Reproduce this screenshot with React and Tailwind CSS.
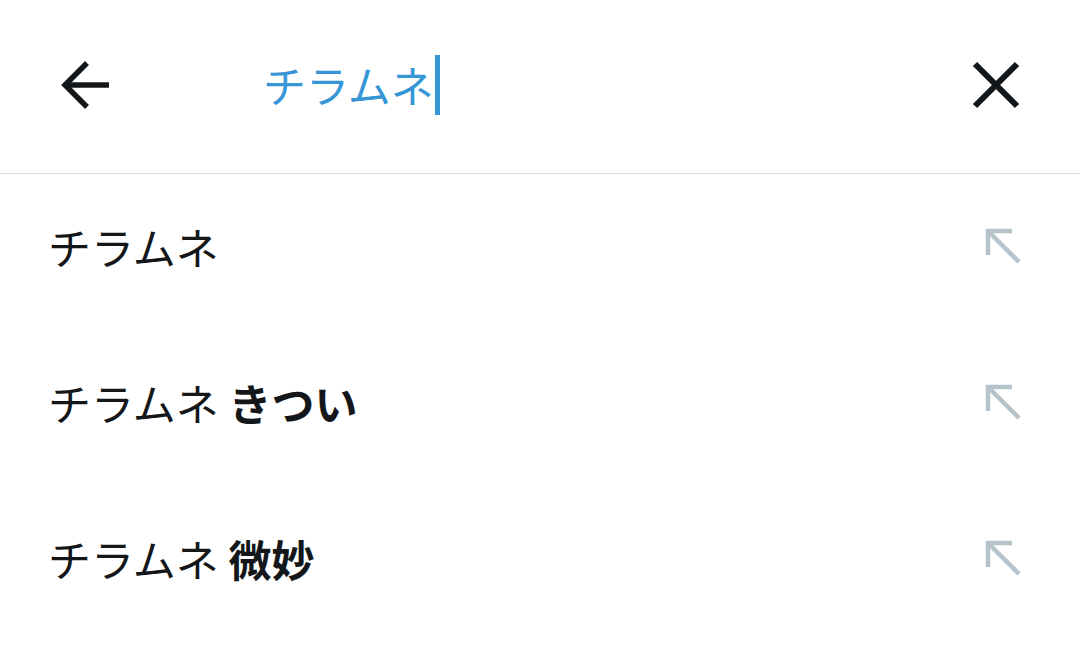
import React from 'react';

const jp = { fontFamily: '"Noto Sans CJK JP", "Noto Sans", sans-serif' };

const suggestions = [
  { base: 'チラムネ', extra: '' },
  { base: 'チラムネ', extra: 'きつい' },
  { base: 'チラムネ', extra: '微妙' },
];

const BackArrow = () => (
  <svg width="52" height="52" viewBox="0 0 52 52" fill="none" stroke="#14171a" strokeWidth="5.5" strokeLinecap="butt">
    <path d="M50 26H6" />
    <path d="M28 4L6 26l22 22" strokeLinejoin="miter" />
  </svg>
);

const CloseIcon = () => (
  <svg width="48" height="48" viewBox="0 0 48 48" fill="none" stroke="#14171a" strokeWidth="6">
    <path d="M3 3l42 42M45 3L3 45" />
  </svg>
);

const FillArrow = () => (
  <svg width="38" height="38" viewBox="0 0 38 38" fill="none" stroke="#b6c3cb" strokeWidth="4.5">
    <path d="M4 28V4h24" />
    <path d="M4 4l31 31" />
  </svg>
);

export default function App() {
  return (
    <div className="w-[1080px] h-[645px] bg-white overflow-hidden" style={jp}>
      <header className="h-[174px] flex items-center border-b border-[#dcdcdc]">
        <div className="w-[170px] flex justify-center pb-[4px]">
          <BackArrow />
        </div>
        <div className="flex-1 flex items-center pl-[93px] pb-[4px]">
          <span className="text-[43px] text-[#3796d6] leading-none">チラムネ</span>
          <span className="w-[5px] h-[60px] bg-[#3796d6] ml-[1px]" />
        </div>
        <div className="w-[168px] flex justify-center pb-[4px]">
          <CloseIcon />
        </div>
      </header>
      <ul>
        {suggestions.map((s, i) => (
          <li key={i} className="h-[156px] flex items-center justify-between pl-[48px] pr-[58px] pb-[12px]">
            <span className="text-[43px] text-[#14171a] leading-none">
              {s.base}
              {s.extra && <span className="font-bold"> {s.extra}</span>}
            </span>
            <FillArrow />
          </li>
        ))}
      </ul>
    </div>
  );
}
